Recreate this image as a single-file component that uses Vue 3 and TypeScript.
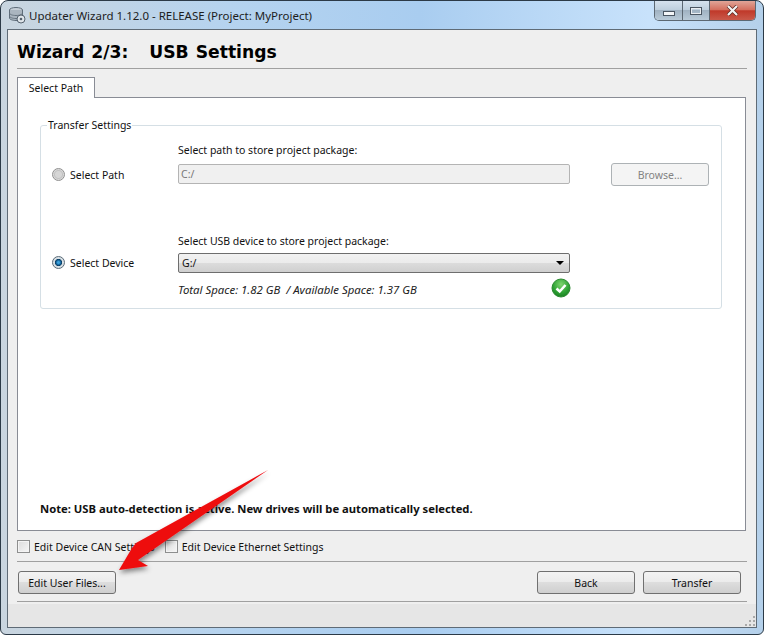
<script setup lang="ts">
const grip: [number, number][] = [[8,0],[8,4],[4,4],[8,8],[4,8],[0,8]]
</script>

<template>
  <div class="window">
    <header class="titlebar">
      <svg class="appicon" width="18" height="18" viewBox="0 0 18 18">
        <ellipse cx="8" cy="4" rx="6.5" ry="2.5" fill="#c5ced6" stroke="#5d6b78" />
        <path d="M1.5 4v8c0 1.4 2.9 2.5 6.5 2.5s6.5-1.1 6.5-2.5V4" fill="#aab5bf" stroke="#5d6b78" />
        <path d="M1.5 7c0 1.4 2.9 2.5 6.5 2.5S14.5 8.4 14.5 7M1.5 10c0 1.4 2.9 2.5 6.5 2.5s6.5-1.1 6.5-2.5" fill="none" stroke="#66737f" />
        <circle cx="13" cy="13" r="4" fill="#dfe5ea" stroke="#55626e" />
        <circle cx="13" cy="13" r="1.3" fill="#55626e" />
      </svg>
      <span class="wintitle">Updater Wizard 1.12.0 - RELEASE (Project: MyProject)</span>
      <div class="controls">
        <div class="ctl min"><i></i></div>
        <div class="ctl max"><i></i></div>
        <div class="ctl close">
          <svg width="13" height="11" viewBox="0 0 13 11"><path d="M2 1l9 9M11 1l-9 9" stroke="#5b2a22" stroke-width="3.6" /><path d="M2 1l9 9M11 1l-9 9" stroke="#f4f4f4" stroke-width="2.2" /></svg>
        </div>
      </div>
    </header>

    <main class="client">
      <div class="content">
        <h1 class="heading">Wizard 2/3:&nbsp;&nbsp; USB Settings</h1>
        <hr class="rule" />
        <div class="tabs"><div class="tab">Select Path</div></div>
        <section class="panel">
          <fieldset class="group">
            <legend>Transfer Settings</legend>
            <div class="row path-row">
              <label class="radio-label"><span class="radio"></span>Select Path</label>
              <div class="fields">
                <div class="caption">Select path to store project package:</div>
                <div class="input">C:/</div>
              </div>
              <button class="btn browse" disabled>Browse...</button>
            </div>
            <div class="row device-row">
              <label class="radio-label"><span class="radio on"></span>Select Device</label>
              <div class="fields">
                <div class="caption">Select USB device to store project package:</div>
                <div class="combo"><span>G:/</span><b class="caret"></b></div>
                <div class="space">
                  <em>Total Space: 1.82 GB&nbsp; / Available Space: 1.37 GB</em>
                  <svg width="20" height="20" viewBox="0 0 20 20">
                    <defs>
                      <radialGradient id="ok" cx="50%" cy="30%" r="75%">
                        <stop offset="0" stop-color="#7fd56f" />
                        <stop offset="0.6" stop-color="#2ea234" />
                        <stop offset="1" stop-color="#167a1f" />
                      </radialGradient>
                    </defs>
                    <circle cx="10" cy="10" r="9" fill="url(#ok)" stroke="#2b8a30" />
                    <path d="M5.5 10.5l3.2 3 5.8-6.5" fill="none" stroke="#fff" stroke-width="2.6" />
                  </svg>
                </div>
              </div>
            </div>
          </fieldset>
          <p class="note">Note: USB auto-detection is active. New drives will be automatically selected.</p>
        </section>
        <div class="checks">
          <label class="check"><span class="box"></span>Edit Device CAN Settings</label>
          <label class="check"><span class="box"></span>Edit Device Ethernet Settings</label>
        </div>
        <hr class="rule" />
        <div class="actions">
          <button class="btn">Edit User Files...</button>
          <div class="right">
            <button class="btn">Back</button>
            <button class="btn">Transfer</button>
          </div>
        </div>
        <hr class="rule" />
      </div>
      <footer class="status">
        <svg class="grip" width="10" height="10" viewBox="0 0 10 10">
          <rect v-for="(p, i) in grip" :key="i" :x="p[0]" :y="p[1]" width="2" height="2" fill="#a9a9a9" />
        </svg>
      </footer>
    </main>

    <svg class="arrow" width="190" height="120" viewBox="0 0 190 120">
      <defs>
        <filter id="sh" x="-20%" y="-20%" width="140%" height="140%">
          <feDropShadow dx="1" dy="3" stdDeviation="2.5" flood-color="#000" flood-opacity="0.45" />
        </filter>
      </defs>
      <polygon points="159,1 27,74 23,79 10,101 39,97 29,91" fill="#ee0a10" filter="url(#sh)" />
    </svg>
  </div>
</template>

<style>
html, body { margin: 0; background: #fff; }
</style>

<style scoped>
.window {
  position: relative;
  width: 764px;
  height: 635px;
  box-sizing: border-box;
  padding: 0 6px 6px;
  display: flex;
  flex-direction: column;
  border: 1px solid #2c3a47;
  border-radius: 8px 8px 6px 6px;
  background:
    linear-gradient(90deg, #c9d5df 0, #b5d3ef 30%, #a9cdf0 55%, #c8e2fb 85%, #b4d0ea 100%);
  font-family: "Noto Sans", Tahoma, sans-serif;
  font-size: 10.5px;
  color: #111;
  overflow: hidden;
}
.titlebar {
  height: 28px;
  flex: none;
  display: flex;
  align-items: center;
  margin: 0 -6px;
  padding-left: 7px;
}
.appicon { margin-right: 3px; flex: none; }
.wintitle { font-size: 11.5px; color: #1d1d1d; }
.controls {
  margin-left: auto;
  margin-right: 7px;
  align-self: flex-start;
  display: flex;
  height: 19px;
  border: 1px solid #5c6873;
  border-top: 0;
  border-radius: 0 0 5px 5px;
  overflow: hidden;
}
.ctl {
  height: 100%;
  display: flex;
  align-items: center;
  justify-content: center;
  background: linear-gradient(#d5e2ee 0, #bfd0de 45%, #a0b2c2 50%, #b9cad8 100%);
  border-right: 1px solid #5c6873;
  box-sizing: border-box;
}
.min { width: 28px; }
.max { width: 27px; }
.close {
  width: 45px;
  border-right: 0;
  background: linear-gradient(#e0a598 0, #d4705f 45%, #c0392a 52%, #c9594a 100%);
}
.min i { width: 10px; height: 3px; background: #f4f6f8; border: 1px solid #4a5561; margin-top: 5px; }
.max i { width: 10px; height: 6px; background: transparent; border: 1px solid #4a5561; outline: 1px solid #e9edf1; outline-offset: -2px; }
.client {
  flex: 1;
  min-height: 0;
  display: flex;
  flex-direction: column;
  background: #efefef;
  border: 1px solid #5f6b76;
}
.content { flex: 1; display: flex; flex-direction: column; padding: 0 9px 2px; min-height: 0; }
.heading {
  margin: 0;
  height: 38px;
  line-height: 44px;
  font-family: "DejaVu Sans", sans-serif;
  font-size: 17.2px;
  font-weight: 700;
  word-spacing: 1px;
  color: #000;
  white-space: nowrap;
}
.rule { margin: 0; height: 1px; border: 0; background: #a0a0a0; flex: none; }
.tabs { margin-top: 8px; height: 21px; flex: none; position: relative; z-index: 1; }
.tab {
  width: 78px;
  height: 21px;
  box-sizing: border-box;
  border: 1px solid #898c95;
  border-bottom: 0;
  background: #fff;
  text-align: center;
  line-height: 20px;
}
.panel {
  flex: 1;
  width: 729px;
  box-sizing: border-box;
  margin-top: -1px;
  min-height: 0;
  background: #fff;
  border: 1px solid #898c95;
  padding: 20px 23px 0 22px;
  display: flex;
  flex-direction: column;
}
.group {
  margin: 0;
  padding: 0 0 0 11px;
  height: 191px;
  box-sizing: border-box;
  border: 1px solid #d5dfe5;
  border-radius: 3px;
  min-width: 0;
  flex: none;
}
legend { padding: 0 1px; margin-left: -5px; line-height: 14px; }
.row { display: flex; position: relative; }
.path-row { height: 91px; margin-top: 12px; }
.radio-label { width: 126px; display: flex; align-items: center; gap: 5px; height: 17px; flex: none; }
.path-row .radio-label { margin-top: 22px; }
.device-row .radio-label { margin-top: 19px; }
.radio {
  width: 11px;
  height: 11px;
  border-radius: 50%;
  border: 1px solid #8f8f8f;
  background: radial-gradient(circle at 50% 50%, #d6d6d6 0 3px, #c2c2c2 4px, #eee 6px);
  flex: none;
}
.radio.on {
  border-color: #5a6b78;
  background: radial-gradient(circle at 50% 50%, #3aa0dc 0 1px, #0d5a8f 2.5px, #0b3f66 3.2px, #d8dfe4 4px);
}
.fields { width: 392px; flex: none; }
.caption { height: 13px; line-height: 13px; margin-bottom: 7px; }
.device-row .caption { margin-bottom: 5px; }
.input {
  height: 20px;
  box-sizing: border-box;
  border: 1px solid #b4b4b4;
  border-radius: 2px;
  background: #f0f0f0;
  color: #777;
  padding-left: 2px;
  line-height: 18px;
}
.combo {
  height: 20px;
  box-sizing: border-box;
  border: 1px solid #6e6e6e;
  border-radius: 2px;
  background: linear-gradient(#f2f2f2 0, #ebebeb 48%, #dcdcdc 50%, #cfcfcf 100%);
  padding: 0 5px 0 3px;
  line-height: 18px;
  display: flex;
  align-items: center;
  justify-content: space-between;
}
.caret { width: 0; height: 0; border: 4px solid transparent; border-top: 4px solid #000; border-bottom: 0; }
.space {
  display: flex;
  justify-content: space-between;
  align-items: center;
  height: 20px;
  margin-top: 6px;
  margin-right: -1px;
}
.space em { font-size: 11.4px; color: #222; }
.space svg { margin-top: -2px; }
.btn {
  width: 98px;
  height: 23px;
  padding: 0;
  font: inherit;
  color: #111;
  border: 1px solid #707070;
  border-radius: 3px;
  background: linear-gradient(#f3f3f3 0, #ebebeb 48%, #dddddd 50%, #cfcfcf 100%);
}
.browse {
  margin-left: 41px;
  margin-top: 19px;
  border-color: #adb2b5;
  background: #f4f4f4;
  color: #838383;
}
.note { margin: auto 0 14px; font-size: 11.25px; font-weight: 700; color: #111; }
.checks { display: flex; gap: 10px; height: 30px; box-sizing: border-box; padding-top: 1px; align-items: center; flex: none; }
.check { display: flex; align-items: center; gap: 4px; }
.box { width: 11px; height: 11px; border: 1px solid #8e8f8f; background: linear-gradient(135deg, #dcdcdc, #f6f6f6); box-shadow: inset 0 0 0 1px #f4f4f4; flex: none; }
.actions { display: flex; justify-content: space-between; align-items: flex-start; height: 39px; box-sizing: border-box; flex: none; padding: 9px 6px 0 1px; }
.right { display: flex; gap: 8px; }
.status { height: 23px; flex: none; position: relative; background: #e6e6e6; }
.grip { position: absolute; right: 1px; bottom: 1px; }
.arrow { position: absolute; left: 108px; top: 468px; pointer-events: none; overflow: visible; }
</style>
